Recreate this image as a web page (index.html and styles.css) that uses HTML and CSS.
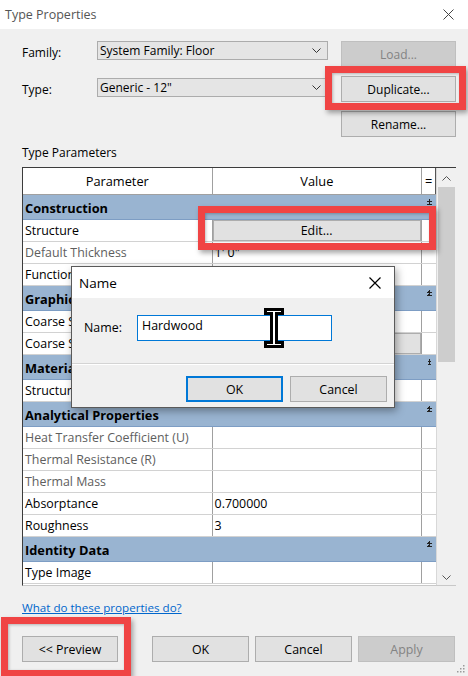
FILE: index.html
```html
<!DOCTYPE html>
<html lang="en">
<head>
    <meta charset="UTF-8">
    <title>Type Properties</title>
    <link rel="stylesheet" href="styles.css">
</head>
<body>
<div class="window">
    <div class="titlebar">
        <span>Type Properties</span>
        <svg class="close" width="11" height="11" viewBox="0 0 11 11"><path d="M0.5 0.5L10.5 10.5M10.5 0.5L0.5 10.5" stroke="#444" stroke-width="1"/></svg>
    </div>

    <div class="content">
        <!-- Family / Type pickers with side buttons -->
        <div class="top">
            <div class="fields">
                <div class="field">
                    <label>Family:</label>
                    <div class="select">System Family: Floor
                        <svg width="9" height="5" viewBox="0 0 9 5"><path d="M0.5 0.5L4.5 4.5L8.5 0.5" fill="none" stroke="#333"/></svg>
                    </div>
                </div>
                <div class="field">
                    <label>Type:</label>
                    <div class="select">Generic - 12"
                        <svg width="9" height="5" viewBox="0 0 9 5"><path d="M0.5 0.5L4.5 4.5L8.5 0.5" fill="none" stroke="#333"/></svg>
                    </div>
                </div>
            </div>
            <div class="side-buttons">
                <button class="btn" disabled>Load...</button>
                <button class="btn">Duplicate...</button>
                <button class="btn">Rename...</button>
            </div>
        </div>

        <div class="section-label">Type Parameters</div>

        <div class="grid">
            <div class="rows">
                <div class="row head">
                    <div class="name">Parameter</div>
                    <div class="value">Value</div>
                    <div class="eq">=</div>
                </div>
                <div class="group">Construction<span class="fold"></span></div>
                <div class="row"><div class="name">Structure</div><div class="value"><span class="cell-btn">Edit...</span></div><div class="eq"></div></div>
                <div class="row"><div class="name dim">Default Thickness</div><div class="value">1' 0"</div><div class="eq"></div></div>
                <div class="row"><div class="name">Function</div><div class="value">Interior</div><div class="eq"></div></div>
                <div class="group">Graphics<span class="fold"></span></div>
                <div class="row"><div class="name">Coarse Scale Fill Pattern</div><div class="value"></div><div class="eq"></div></div>
                <div class="row"><div class="name">Coarse Scale Fill Color</div><div class="value"><span class="cell-btn">Black</span></div><div class="eq"></div></div>
                <div class="group">Materials and Finishes<span class="fold"></span></div>
                <div class="row"><div class="name">Structural Material</div><div class="value"></div><div class="eq"></div></div>
                <div class="group">Analytical Properties<span class="fold"></span></div>
                <div class="row"><div class="name dim">Heat Transfer Coefficient (U)</div><div class="value"></div><div class="eq"></div></div>
                <div class="row"><div class="name dim">Thermal Resistance (R)</div><div class="value"></div><div class="eq"></div></div>
                <div class="row"><div class="name dim">Thermal Mass</div><div class="value"></div><div class="eq"></div></div>
                <div class="row"><div class="name">Absorptance</div><div class="value">0.700000</div><div class="eq"></div></div>
                <div class="row"><div class="name">Roughness</div><div class="value">3</div><div class="eq"></div></div>
                <div class="group">Identity Data<span class="fold"></span></div>
                <div class="row"><div class="name">Type Image</div><div class="value"></div><div class="eq"></div></div>
            </div>
            <div class="scrollbar">
                <svg class="arrow" width="9" height="5" viewBox="0 0 9 5"><path d="M0.5 4.5L4.5 0.5L8.5 4.5" fill="none" stroke="#555"/></svg>
                <div class="thumb"></div>
                <svg class="arrow down" width="9" height="5" viewBox="0 0 9 5"><path d="M0.5 0.5L4.5 4.5L8.5 0.5" fill="none" stroke="#555"/></svg>
            </div>
        </div>

        <a class="help" href="#">What do these properties do?</a>

        <div class="footer">
            <button class="btn preview">&lt;&lt; Preview</button>
            <div class="footer-right">
                <button class="btn">OK</button>
                <button class="btn">Cancel</button>
                <button class="btn" disabled>Apply</button>
            </div>
        </div>
    </div>

    <svg class="grip" width="8" height="8" viewBox="0 0 8 8" fill="#9a9a9a">
        <rect x="6" y="0" width="1.5" height="1.5"/><rect x="3" y="3" width="1.5" height="1.5"/><rect x="6" y="3" width="1.5" height="1.5"/>
        <rect x="0" y="6" width="1.5" height="1.5"/><rect x="3" y="6" width="1.5" height="1.5"/><rect x="6" y="6" width="1.5" height="1.5"/>
    </svg>

    <!-- Name dialog on top -->
    <div class="dialog">
        <div class="dialog-title">
            <span>Name</span>
            <svg width="12" height="12" viewBox="0 0 12 12"><path d="M0.5 0.5L11.5 11.5M11.5 0.5L0.5 11.5" stroke="#000" stroke-width="1.2"/></svg>
        </div>
        <div class="dialog-body">
            <label>Name:</label>
            <div class="input">Hardwood</div>
        </div>
        <div class="dialog-buttons">
            <button class="btn default">OK</button>
            <button class="btn">Cancel</button>
        </div>
    </div>

    <svg class="ibeam" width="22" height="42" viewBox="0 0 22 42">
        <path d="M2 2H20V7H14V35H20V40H2V35H8V7H2Z" fill="#000" stroke="#000" stroke-width="2" stroke-linejoin="miter"/>
        <path d="M4 4H18V5H12V37H18V38H4V37H10V5H4Z" fill="#fff"/>
    </svg>

    <!-- red callouts -->
    <div class="callout dup"></div>
    <div class="callout edit"></div>
    <div class="callout prev"></div>
</div>
</body>
</html>
```

FILE: styles.css
```css
* {
    box-sizing: border-box;
}
body {
    margin: 0;
    background: #f0f0f0;
    font-family: "Open Sans", "Noto Sans", sans-serif;
    font-size: 12px;
    color: #000;
}
.window {
    position: relative;
    width: 468px;
    height: 676px;
    overflow: hidden;
    background: #f0f0f0;
}
.titlebar {
    height: 29px;
    background: #fff;
    display: flex;
    align-items: center;
    justify-content: space-between;
    padding: 0 14px 0 5px;
    color: #555;
    font-size: 12.5px;
}
.content {
    padding: 12px 12px 0 22px;
}

/* Family / Type */
.top {
    display: flex;
}
.fields {
    width: 306px;
    margin-right: 13px;
    display: flex;
    flex-direction: column;
    gap: 18px;
}
.field {
    display: flex;
    align-items: center;
    height: 19px;
}
.field label {
    width: 75px;
    padding-top: 3px;
}
.select {
    flex: 1;
    height: 19px;
    background: #e5e5e5;
    border: 1px solid #acacac;
    display: flex;
    align-items: center;
    justify-content: space-between;
    padding: 0 6px 0 2px;
}
.side-buttons {
    width: 115px;
    display: flex;
    flex-direction: column;
    gap: 9px;
}
.btn {
    height: 26px;
    background: #e1e1e1;
    border: 1px solid #adadad;
    font: inherit;
    color: #000;
    padding: 0;
}
.btn:disabled {
    background: #cccccc;
    border-color: #bfbfbf;
    color: #838383;
}

.section-label {
    margin-top: 8px;
    line-height: 16px;
}

/* Parameter grid */
.grid {
    display: flex;
    margin-top: 6px;
    width: 434px;
    height: 419px;
    border-top: 1px solid #3c3c3c;
    border-left: 1px solid #3c3c3c;
    border-bottom: 1px solid #c8c8c8;
}
.rows {
    width: 414px;
    overflow: hidden;
    background: #fff;
    font-size: 12.4px;
}
.row {
    display: flex;
    height: 22px;
    border-bottom: 1px solid #d2d2d2;
    line-height: 22px;
    white-space: nowrap;
}
.row .name {
    width: 190px;
    border-right: 1px solid #a0a0a0;
    padding-left: 2px;
    overflow: hidden;
}
.row .value {
    width: 210px;
    border-right: 1px solid #a0a0a0;
    padding-left: 2px;
    position: relative;
}
.row .eq {
    width: 14px;
    text-align: center;
}
.row .dim {
    color: #5e5e5e;
}
.row.head {
    height: 27px;
    line-height: 26px;
    border-bottom-color: #a0a0a0;
    text-align: center;
    font-size: 12.8px;
}
.row.head .name,
.row.head .value {
    padding-left: 0;
}
.row.head .eq {
    border-right: 1px solid #555;
}
.cell-btn {
    position: absolute;
    left: 0;
    top: 0;
    width: 208px;
    height: 21px;
    background: #e1e1e1;
    border: 1px solid #adadad;
    text-align: center;
    line-height: 19px;
}
.group {
    position: relative;
    height: 25px;
    line-height: 26px;
    padding-left: 2px;
    background: #99b4d1;
    border-bottom: 1px solid #7d9dc4;
    font-weight: bold;
    font-size: 12.8px;
}
.fold {
    position: absolute;
    right: 4px;
    top: 4px;
    width: 5px;
    height: 6px;
    background:
        linear-gradient(135deg, transparent 50%, #222 50%) 0 0 / 3px 3px no-repeat,
        linear-gradient(225deg, transparent 50%, #222 50%) 2px 0 / 3px 3px no-repeat,
        linear-gradient(135deg, transparent 50%, #222 50%) 0 3px / 3px 3px no-repeat,
        linear-gradient(225deg, transparent 50%, #222 50%) 2px 3px / 3px 3px no-repeat;
}

.scrollbar {
    width: 20px;
    background: #f0f0f0;
    border-left: 1px solid #d8d8d8;
    display: flex;
    flex-direction: column;
    align-items: center;
}
.scrollbar .arrow {
    margin: 8px 0 6px;
}
.scrollbar .arrow.down {
    margin: auto 0 5px;
}
.thumb {
    width: 17px;
    height: 175px;
    background: #cdcdcd;
}

.help {
    display: inline-block;
    margin-top: 14px;
    line-height: 16px;
    color: #0066cc;
    font-size: 11.6px;
}
.footer {
    display: flex;
    margin-top: 20px;
    gap: 34px;
    font-size: 12.4px;
}
.footer .btn {
    width: 97px;
}
.footer .preview {
    width: 96px;
}
.footer-right {
    display: flex;
    gap: 6px;
}
.grip {
    position: absolute;
    right: 3px;
    bottom: 3px;
}

/* Name dialog */
.dialog {
    position: absolute;
    left: 71px;
    top: 266px;
    width: 324px;
    height: 142px;
    background: #f0f0f0;
    border: 1px solid #5a5a5a;
    box-shadow: 2px 3px 8px rgba(0, 0, 0, 0.35);
    font-size: 12.4px;
}
.dialog-title {
    height: 31px;
    background: #fff;
    display: flex;
    align-items: center;
    justify-content: space-between;
    padding: 0 13px 0 7px;
    font-size: 13.5px;
}
.dialog-body {
    display: flex;
    padding: 17px 0 0 12px;
    height: 66px;
    border-bottom: 1px solid #d4d4d4;
}
.dialog-body label {
    width: 53px;
    padding-top: 4px;
}
.input {
    width: 195px;
    height: 26px;
    background: #fff;
    border: 1px solid #0078d7;
    padding: 1px 4px;
    line-height: 17px;
}
.dialog-buttons {
    display: flex;
    gap: 7px;
    padding: 11px 0 0 114px;
    border-top: 1px solid #fff;
}
.dialog-buttons .btn {
    width: 97px;
}
.dialog-buttons .default {
    border: 2px solid #0078d7;
}

.ibeam {
    position: absolute;
    left: 263px;
    top: 307px;
}

/* red highlight boxes */
.callout {
    position: absolute;
    border: 7px solid #f04444;
    box-shadow: 2px 3px 5px rgba(0, 0, 0, 0.35), inset 1px 1px 3px rgba(0, 0, 0, 0.25);
}
.callout.dup {
    left: 325px;
    top: 66px;
    width: 141px;
    height: 44px;
}
.callout.edit {
    left: 198px;
    top: 206px;
    width: 238px;
    height: 44px;
}
.callout.prev {
    left: 1px;
    top: 617px;
    width: 130px;
    height: 60px;
}
```
